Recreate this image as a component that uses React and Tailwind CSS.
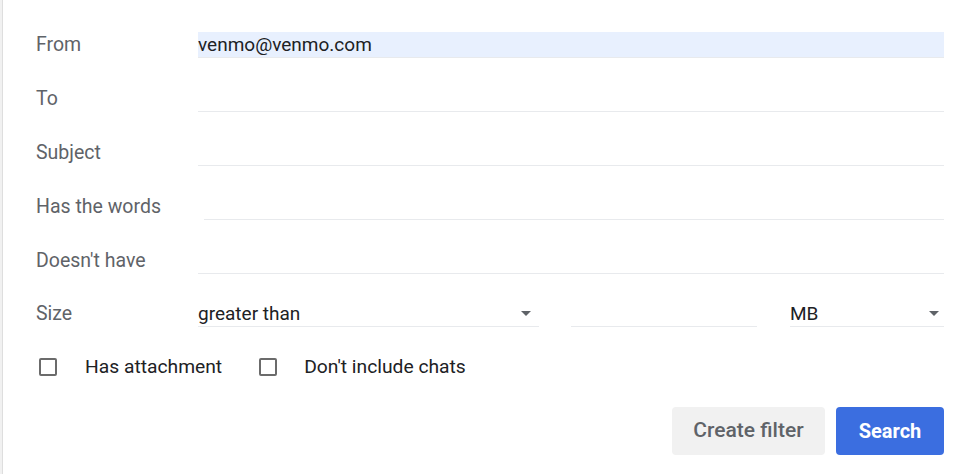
import React from "react";

const font = { fontFamily: "Roboto, 'Liberation Sans', Arial, sans-serif" };

function Row({ label, children, first, gapTop = "mt-[28px]", inputClass = "" }) {
  return (
    <div className={`flex items-center h-[26px] ${first ? "mt-[32px]" : gapTop}`}>
      <div className="w-[162px] shrink-0 text-[19.5px] text-[#5f6368] leading-none -mt-[1px]">{label}</div>
      <div className={`flex-1 h-[26px] border-b border-[#e8eaed] ${inputClass}`}>{children}</div>
    </div>
  );
}

function Arrow() {
  return (
    <svg width="10" height="5" viewBox="0 0 10 5" className="shrink-0">
      <path d="M0 0 L10 0 L5 5 Z" fill="#5f6368" />
    </svg>
  );
}

function Checkbox() {
  return <div className="w-[18px] h-[18px] border-2 border-[#6b6b6b] rounded-[2px] shrink-0" />;
}

export default function App() {
  return (
    <div className="w-[965px] h-[474px] bg-white flex overflow-hidden" style={font}>
      <div className="w-[3px] h-full bg-[#f1f1f1] border-r border-[#dedede] shrink-0" />
      <div className="flex-1 pl-[33px] pr-[21px]">
        <Row label="From" first inputClass="bg-[#e8f0fe]">
          <div className="h-full flex items-center text-[19px] text-[#202124] leading-none">venmo@venmo.com</div>
        </Row>
        <Row label="To" />
        <Row label="Subject" />
        <Row label="Has the words" inputClass="ml-[6px]" />
        <Row label="Doesn't have" />
        <div className="flex items-center h-[26px] mt-[27px]">
          <div className="w-[162px] shrink-0 text-[19.5px] text-[#5f6368] leading-none -mt-[1px]">Size</div>
          <div className="w-[341px] h-[26px] border-b border-[#e8eaed] flex items-center justify-between pr-[8px] text-[19px] text-[#202124] leading-none">
            <span>greater than</span>
            <Arrow />
          </div>
          <div className="w-[186px] h-[26px] border-b border-[#e8eaed] ml-[32px]" />
          <div className="flex-1 h-[26px] border-b border-[#e8eaed] ml-[33px] flex items-center justify-between pr-[5px] text-[19px] text-[#202124] leading-none">
            <span>MB</span>
            <Arrow />
          </div>
        </div>
        <div className="flex items-center mt-[31px] h-[18px] text-[19.25px] text-[#202124] leading-none">
          <div className="ml-[3px]"><Checkbox /></div>
          <span className="ml-[28px]">Has attachment</span>
          <div className="ml-[37px]"><Checkbox /></div>
          <span className="ml-[27px]">Don't include chats</span>
        </div>
        <div className="flex justify-end mt-[31px] gap-[11px]">
          <button className="w-[153px] h-[48px] rounded-[4px] bg-[#f1f1f1] text-[21px] font-medium text-[#5f6368]">
            Create filter
          </button>
          <button className="w-[108px] h-[48px] rounded-[4px] bg-[#3b6ee0] text-[20px] font-bold text-white">
            Search
          </button>
        </div>
      </div>
    </div>
  );
}
